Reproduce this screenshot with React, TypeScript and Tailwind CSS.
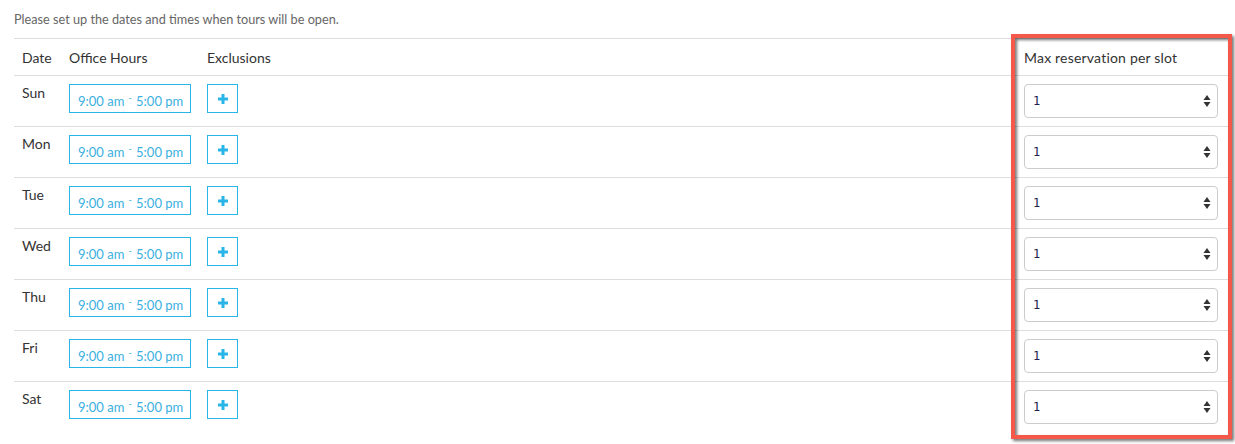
import React from "react";

const DAYS = ["Sun", "Mon", "Tue", "Wed", "Thu", "Fri", "Sat"];

function PlusIcon() {
  return (
    <svg width="10" height="10" viewBox="0 0 10 10" className="fill-[#29b5e8]">
      <rect x="3.5" y="0" width="3" height="10" />
      <rect x="0" y="3.5" width="10" height="3" />
    </svg>
  );
}

function Spinner() {
  return (
    <svg width="8" height="14" viewBox="0 0 8 14" className="fill-[#333]">
      <path d="M4 1 L7.5 6 L0.5 6 Z" />
      <path d="M4 13 L7.5 8 L0.5 8 Z" />
    </svg>
  );
}

export default function App() {
  return (
    <div className="relative h-[444px] w-[1235px] bg-white font-['Lato','Liberation_Sans',sans-serif] text-[#333]">
      <p className="px-[14px] pt-[11px] pb-[11px] text-[12.7px] leading-[16px] text-[#666]">
        Please set up the dates and times when tours will be open.
      </p>

      <div className="ml-[14px] w-[1214px]">
        {/* header */}
        <div className="flex h-[37px] items-center border-t border-[#ddd] text-[14px]">
          <div className="w-[47px] pl-2">Date</div>
          <div className="w-[138px] pl-2">Office Hours</div>
          <div className="w-[817px] pl-2">Exclusions</div>
          <div className="w-[212px] pl-2 tracking-[0.2px]">Max reservation per slot</div>
        </div>

        {DAYS.map((day) => (
          <div key={day} className="flex h-[51px] border-t border-[#ddd] pt-2 text-[14px]">
            <div className="w-[47px] pl-2 leading-[18px]">{day}</div>
            <div className="w-[138px] pl-2">
              <div className="flex h-[29px] w-[122px] items-end border border-[#29b5e8] pb-[3px] pl-2 text-[13px] leading-[16px] text-[#3aafe0]">
                9:00 am <span className="relative -top-[4px] mx-[4px] text-[10px]">-</span> 5:00 pm
              </div>
            </div>
            <div className="w-[817px] pl-2">
              <button className="flex h-[29px] w-[31px] items-center justify-center border border-[#29b5e8] bg-white">
                <PlusIcon />
              </button>
            </div>
            <div className="w-[212px] pl-2">
              <div className="flex h-[34px] w-[194px] items-center justify-between rounded-[4px] border border-[#ccc] bg-white pl-2 pr-[6px] font-['DejaVu_Sans_Mono',monospace] text-[12px] text-[#222250]">
                1
                <Spinner />
              </div>
            </div>
          </div>
        ))}
      </div>

      {/* annotation frame */}
      <div className="pointer-events-none absolute left-[1011px] top-[34px] h-[405px] w-[221px] border-[4px] border-[#f4584b] drop-shadow-[2px_2px_1.5px_rgba(0,0,0,0.55)]" />
    </div>
  );
}
